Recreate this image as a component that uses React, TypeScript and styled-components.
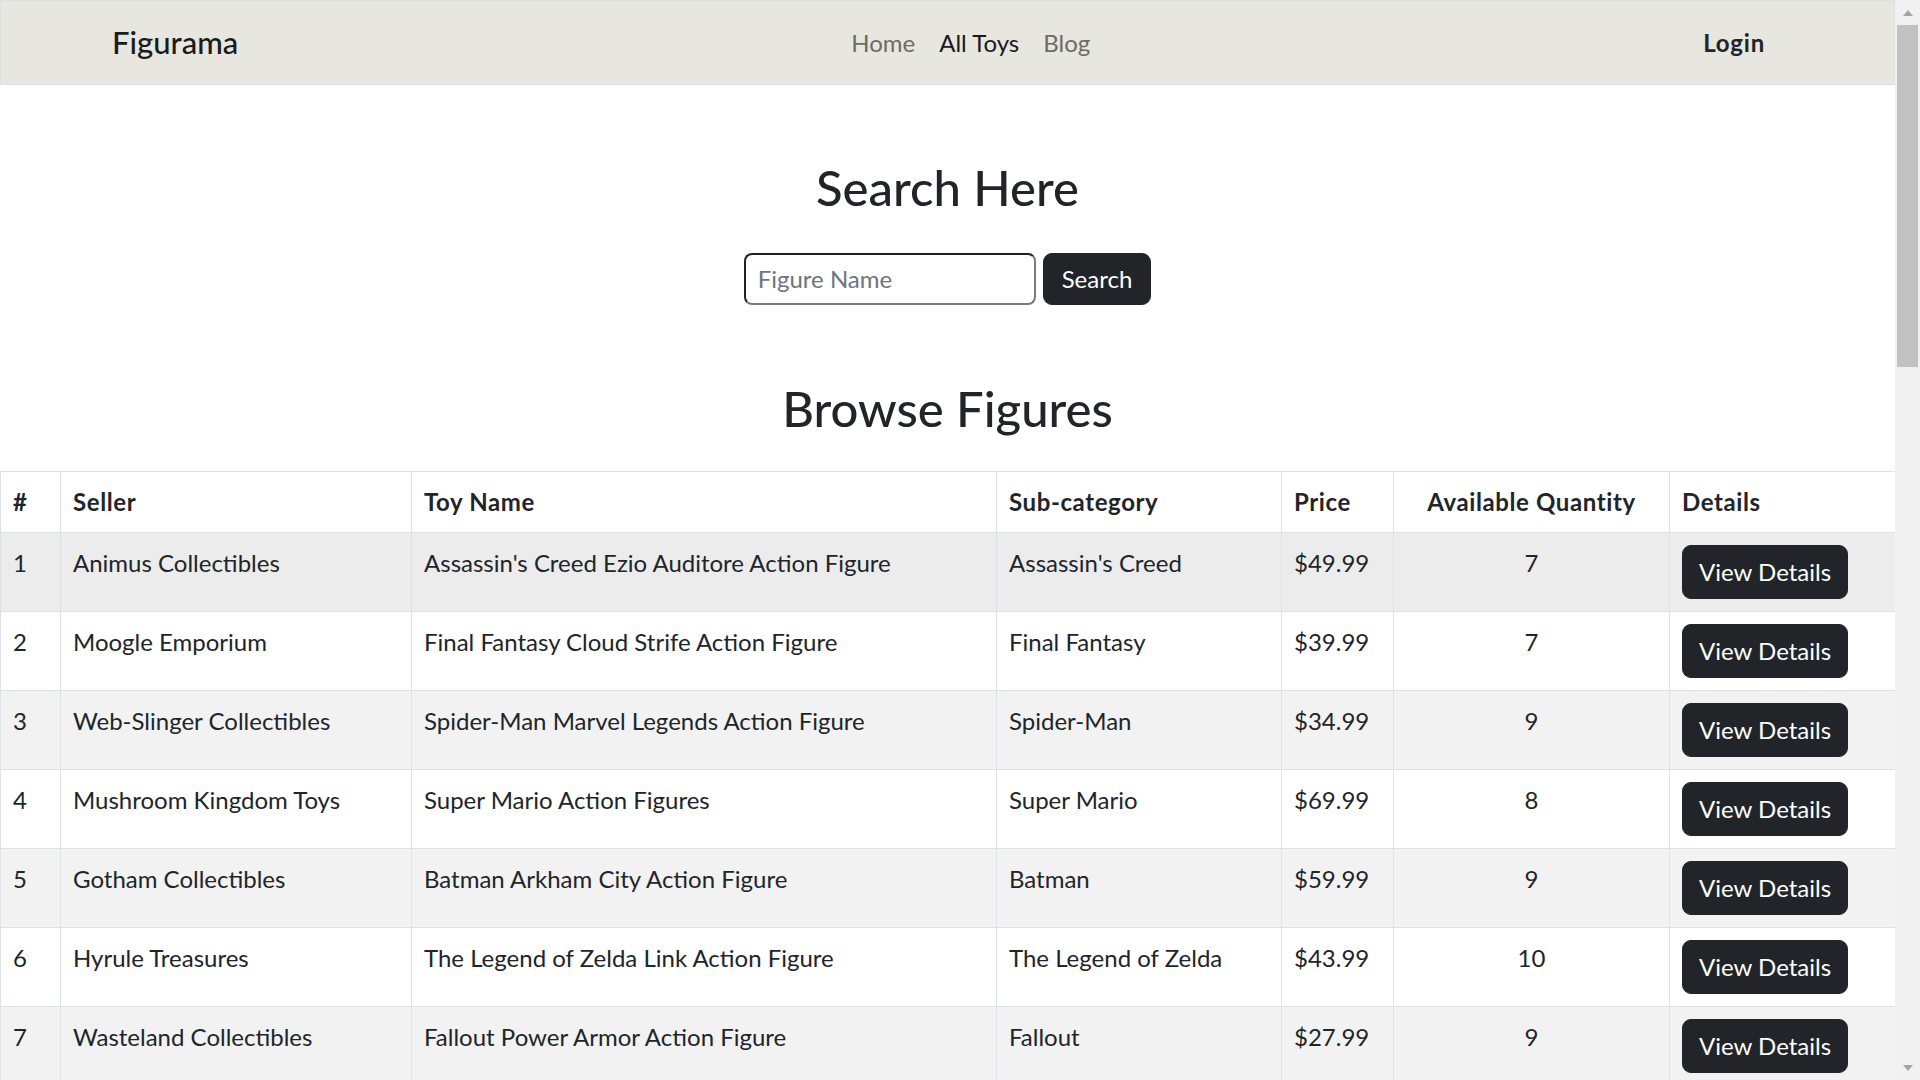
import React from "react";
import styled, { createGlobalStyle } from "styled-components";

const FONT = `Lato, "Segoe UI", "Noto Sans", sans-serif`;

const GlobalStyle = createGlobalStyle`
  html, body {
    margin: 0;
    height: 100%;
    overflow: hidden;
  }
  body {
    background: #ffffff;
    color: #212529;
    font-family: ${FONT};
    font-size: 24px;
    line-height: 1.5;
  }
  * {
    box-sizing: border-box;
  }
`;

const Frame = styled.div`
  display: flex;
  height: 100vh;
  overflow: hidden;
`;

const Viewport = styled.div`
  flex: 1;
  min-width: 0;
  display: flex;
  flex-direction: column;
  overflow: hidden;
`;

const ScrollBar = styled.div`
  width: 25px;
  flex: none;
  display: flex;
  flex-direction: column;
  background: #f1f1f1;
`;

const ScrollArrow = styled.div`
  height: 25px;
  display: flex;
  align-items: center;
  justify-content: center;
`;

const ScrollTrack = styled.div`
  flex: 1;
  display: flex;
  flex-direction: column;
  padding: 0 2px;
`;

const ScrollThumb = styled.div`
  height: 342px;
  background: #c1c1c1;
`;

const NavBar = styled.nav`
  height: 85px;
  flex: none;
  display: flex;
  align-items: center;
  justify-content: space-between;
  padding: 0 129px 0 111px;
  background: #e7e6df;
  border: 1px solid #dde0e3;
`;

const Brand = styled.a`
  font-size: 31px;
  font-weight: 500;
  color: #1b1b1b;
  text-decoration: none;
  line-height: 1.5;
`;

const NavLinks = styled.div`
  display: flex;
  gap: 24px;
`;

const NavLink = styled.a<{ $active?: boolean }>`
  font-size: 24px;
  color: ${(p) => (p.$active ? "#1a1a1a" : "#6c6b67")};
  text-decoration: none;
`;

const LoginLink = styled.a`
  font-size: 24px;
  font-weight: 700;
  letter-spacing: 0.8px;
  color: #212529;
  text-decoration: none;
`;

const Heading = styled.h2<{ $top: number; $bottom: number }>`
  margin: ${(p) => p.$top}px 0 ${(p) => p.$bottom}px;
  font-size: 49px;
  font-weight: 500;
  line-height: 1.2;
  text-align: center;
  color: #212529;
`;

const SearchForm = styled.form`
  display: flex;
  justify-content: center;
  gap: 7px;
  margin: 0;
`;

const SearchInput = styled.input`
  width: 292px;
  height: 52px;
  padding: 0 12px;
  font-family: ${FONT};
  font-size: 24px;
  color: #212529;
  border: 2px solid;
  border-color: #1f2124 #7a7a7a #7a7a7a #1f2124;
  border-radius: 8px;
  outline: none;
  &::placeholder {
    color: #6c757d;
  }
`;

const DarkButton = styled.button<{ $height: number; $padX: number }>`
  height: ${(p) => p.$height}px;
  padding: 0 ${(p) => p.$padX}px;
  font-family: ${FONT};
  font-size: 24px;
  line-height: 1;
  color: #ffffff;
  background: #212529;
  border: 1px solid #212529;
  border-radius: 9px;
  cursor: pointer;
`;

const Table = styled.table`
  width: 100%;
  border-collapse: collapse;
  table-layout: fixed;
  font-size: 24px;
`;

const HeadCell = styled.th<{ $w: number; $center?: boolean }>`
  width: ${(p) => p.$w}px;
  padding: 12px;
  line-height: 36px;
  font-weight: 700;
  letter-spacing: 0.6px;
  text-align: ${(p) => (p.$center ? "center" : "left")};
  border: 1px solid #dee2e6;
  white-space: nowrap;
`;

const Row = styled.tr<{ $shade: "hover" | "stripe" | "none" }>`
  background: ${(p) =>
    p.$shade === "hover" ? "#ececec" : p.$shade === "stripe" ? "#f2f2f2" : "#ffffff"};
`;

const Cell = styled.td<{ $center?: boolean }>`
  padding: 12px;
  line-height: 36px;
  vertical-align: top;
  text-align: ${(p) => (p.$center ? "center" : "left")};
  border: 1px solid #dee2e6;
  white-space: nowrap;
`;

type Toy = {
  seller: string;
  name: string;
  sub: string;
  price: string;
  qty: number;
};

const toys: Toy[] = [
  { seller: "Animus Collectibles", name: "Assassin's Creed Ezio Auditore Action Figure", sub: "Assassin's Creed", price: "$49.99", qty: 7 },
  { seller: "Moogle Emporium", name: "Final Fantasy Cloud Strife Action Figure", sub: "Final Fantasy", price: "$39.99", qty: 7 },
  { seller: "Web-Slinger Collectibles", name: "Spider-Man Marvel Legends Action Figure", sub: "Spider-Man", price: "$34.99", qty: 9 },
  { seller: "Mushroom Kingdom Toys", name: "Super Mario Action Figures", sub: "Super Mario", price: "$69.99", qty: 8 },
  { seller: "Gotham Collectibles", name: "Batman Arkham City Action Figure", sub: "Batman", price: "$59.99", qty: 9 },
  { seller: "Hyrule Treasures", name: "The Legend of Zelda Link Action Figure", sub: "The Legend of Zelda", price: "$43.99", qty: 10 },
  { seller: "Wasteland Collectibles", name: "Fallout Power Armor Action Figure", sub: "Fallout", price: "$27.99", qty: 9 },
];

const Arrow = ({ down }: { down?: boolean }) => (
  <svg width="10" height="6" viewBox="0 0 10 6">
    <polygon points={down ? "0,0 10,0 5,6" : "0,6 10,6 5,0"} fill="#a3a3a3" />
  </svg>
);

export default function App() {
  return (
    <>
      <GlobalStyle />
      <Frame>
        <Viewport>
          <NavBar>
            <Brand href="#">Figurama</Brand>
            <NavLinks>
              <NavLink href="#">Home</NavLink>
              <NavLink href="#" $active>
                All Toys
              </NavLink>
              <NavLink href="#">Blog</NavLink>
            </NavLinks>
            <LoginLink href="#">Login</LoginLink>
          </NavBar>

          <Heading $top={73} $bottom={36}>
            Search Here
          </Heading>
          <SearchForm onSubmit={(e) => e.preventDefault()}>
            <SearchInput type="text" placeholder="Figure Name" />
            <DarkButton type="submit" $height={52} $padX={18}>
              Search
            </DarkButton>
          </SearchForm>

          <Heading $top={74} $bottom={33}>
            Browse Figures
          </Heading>

          <Table>
            <thead>
              <tr>
                <HeadCell $w={60}>#</HeadCell>
                <HeadCell $w={351}>Seller</HeadCell>
                <HeadCell $w={585}>Toy Name</HeadCell>
                <HeadCell $w={285}>Sub-category</HeadCell>
                <HeadCell $w={112}>Price</HeadCell>
                <HeadCell $w={276} $center>
                  Available Quantity
                </HeadCell>
                <HeadCell $w={226}>Details</HeadCell>
              </tr>
            </thead>
            <tbody>
              {toys.map((t, i) => (
                <Row key={i} $shade={i === 0 ? "hover" : i % 2 === 0 ? "stripe" : "none"}>
                  <Cell>{i + 1}</Cell>
                  <Cell>{t.seller}</Cell>
                  <Cell>{t.name}</Cell>
                  <Cell>{t.sub}</Cell>
                  <Cell>{t.price}</Cell>
                  <Cell $center>{t.qty}</Cell>
                  <Cell>
                    <DarkButton type="button" $height={54} $padX={16}>
                      View Details
                    </DarkButton>
                  </Cell>
                </Row>
              ))}
            </tbody>
          </Table>
        </Viewport>
        <ScrollBar>
          <ScrollArrow>
            <Arrow />
          </ScrollArrow>
          <ScrollTrack>
            <ScrollThumb />
          </ScrollTrack>
          <ScrollArrow>
            <Arrow down />
          </ScrollArrow>
        </ScrollBar>
      </Frame>
    </>
  );
}
